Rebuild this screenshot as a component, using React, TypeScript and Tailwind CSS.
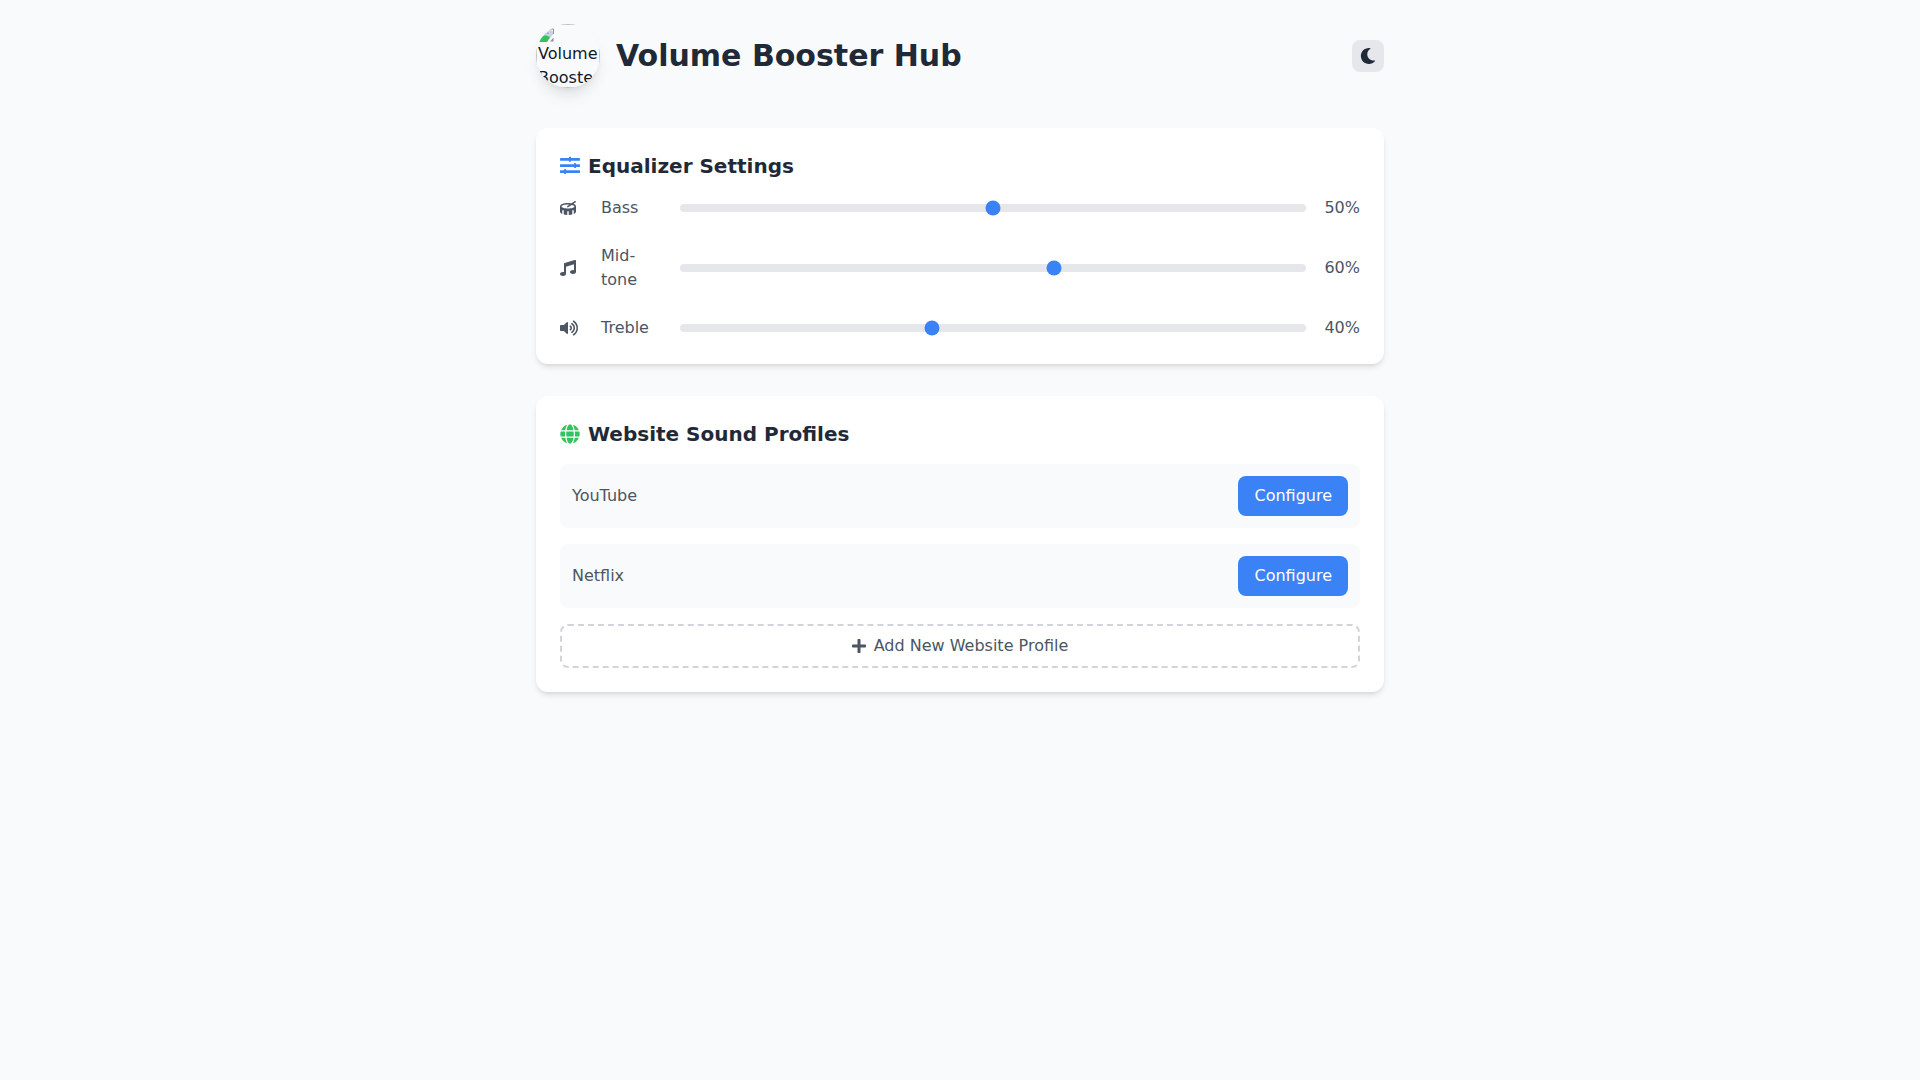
import { useState } from "react";
import type { IconType } from "react-icons";
import { FaDrum, FaGlobe, FaMoon, FaMusic, FaPlus, FaVolumeUp } from "react-icons/fa";

interface Band {
  id: string;
  label: string;
  icon: IconType;
  iconClass: string;
  value: number;
}

const initialBands: Band[] = [
  { id: "bass", label: "Bass", icon: FaDrum, iconClass: "h-4 w-4", value: 50 },
  { id: "mid", label: "Mid-tone", icon: FaMusic, iconClass: "h-4 w-4", value: 60 },
  { id: "treble", label: "Treble", icon: FaVolumeUp, iconClass: "h-4 w-[18px]", value: 40 },
];

const profiles = ["YouTube", "Netflix"];

function Logo() {
  return (
    <div
      role="img"
      aria-label="Volume Booster"
      className="h-16 w-16 shrink-0 overflow-hidden rounded-full text-[#111827] shadow-lg"
    >
      <div className="h-full border border-[#c0c0c0] p-px">
        <svg className="block h-4 w-4" viewBox="0 0 16 16">
          <path d="M1 2h10l4 4v3L9 16H1z" fill="#cdd4e0" />
          <path d="M1 16v-3l4-3c3-1 5 0 7 1l-3 5z" fill="#2fc45f" />
          <path d="M9 7l1-1 1 1v1H9z" fill="#8fb0ee" />
          <path d="M11 3h4.5v5" fill="none" stroke="#8b8f94" />
          <path d="M15.5 11.5v4H12z" fill="#8b8f94" />
          <path d="M16.500 8L10.500 16" fill="none" stroke="#fff" strokeWidth="1.500" />
        </svg>
        <p>Volume Booster</p>
      </div>
    </div>
  );
}

function SlidersIcon() {
  return (
    <svg className="h-5 w-5 shrink-0" viewBox="0 0 20 20" fill="#3b82f6" aria-hidden="true">
      <rect x="0" y="2" width="20" height="2.700" rx="0.400" />
      <rect x="9" y="0.700" width="2" height="5" rx="0.400" />
      <rect x="0" y="8.200" width="20" height="2.700" rx="0.400" />
      <rect x="14" y="7" width="2" height="5" rx="0.400" />
      <rect x="0" y="14.200" width="20" height="2.700" rx="0.400" />
      <rect x="4" y="13" width="2" height="5" rx="0.400" />
    </svg>
  );
}

function EqualizerCard() {
  const [bands, setBands] = useState(initialBands);

  const handleChange = (id: string, value: number) => {
    setBands(bands.map((b) => (b.id === id ? { ...b, value } : b)));
  };

  return (
    <section className="rounded-xl bg-white p-6 shadow-md">
      <h2 className="mb-4 flex items-center gap-2 text-xl font-bold">
        <SlidersIcon />
        Equalizer Settings
      </h2>
      <div className="space-y-6 text-[#4b5563]">
        {bands.map(({ id, label, icon: Icon, iconClass, value }) => (
          <div key={id} className="flex items-center gap-4">
            <span className="w-[25px] shrink-0">
              <Icon className={iconClass} />
            </span>
            <label htmlFor={id} className="w-[63px] shrink-0">
              {label}
            </label>
            <input
              id={id}
              type="range"
              min={0}
              max={100}
              value={value}
              onChange={(e) => handleChange(id, Number(e.target.value))}
              className="h-2 min-w-0 flex-1 cursor-pointer appearance-none rounded-lg bg-[#e5e7eb] accent-[#3b82f6]"
            />
            <span className="w-[38px] shrink-0 text-right">{value}%</span>
          </div>
        ))}
      </div>
    </section>
  );
}

function ProfilesCard() {
  return (
    <section className="rounded-xl bg-white p-6 shadow-md">
      <h2 className="mb-4 flex items-center gap-2 text-xl font-bold">
        <FaGlobe className="text-[#2fc45f]" />
        Website Sound Profiles
      </h2>
      <ul className="space-y-4">
        {profiles.map((name) => (
          <li
            key={name}
            className="flex items-center justify-between rounded-lg bg-[#f9fafb] p-3"
          >
            <span className="text-[#4b5563]">{name}</span>
            <button className="rounded-lg bg-[#3b82f6] px-4 py-2 text-white hover:bg-[#2563eb]">
              Configure
            </button>
          </li>
        ))}
      </ul>
      <button className="mt-4 flex w-full items-center justify-center gap-2 rounded-lg border-2 border-dashed border-[#d1d5db] py-2 text-[#4b5563] hover:border-[#3b82f6]">
        <FaPlus className="h-4 w-[14px]" />
        Add New Website Profile
      </button>
    </section>
  );
}

export default function App() {
  return (
    <div className="min-h-screen bg-[#f9fafb] font-['DejaVu_Sans',sans-serif] text-[#1f2937]">
      <div className="mx-auto max-w-4xl p-6">
        <header className="mb-10 flex items-center justify-between">
          <div className="flex items-center gap-4">
            <Logo />
            <h1 className="text-3xl font-bold">Volume Booster Hub</h1>
          </div>
          <button
            aria-label="Toggle dark mode"
            className="rounded-lg bg-[#e5e7eb] p-2 hover:bg-[#d1d5db]"
          >
            <FaMoon />
          </button>
        </header>
        <main className="space-y-8">
          <EqualizerCard />
          <ProfilesCard />
        </main>
      </div>
    </div>
  );
}
